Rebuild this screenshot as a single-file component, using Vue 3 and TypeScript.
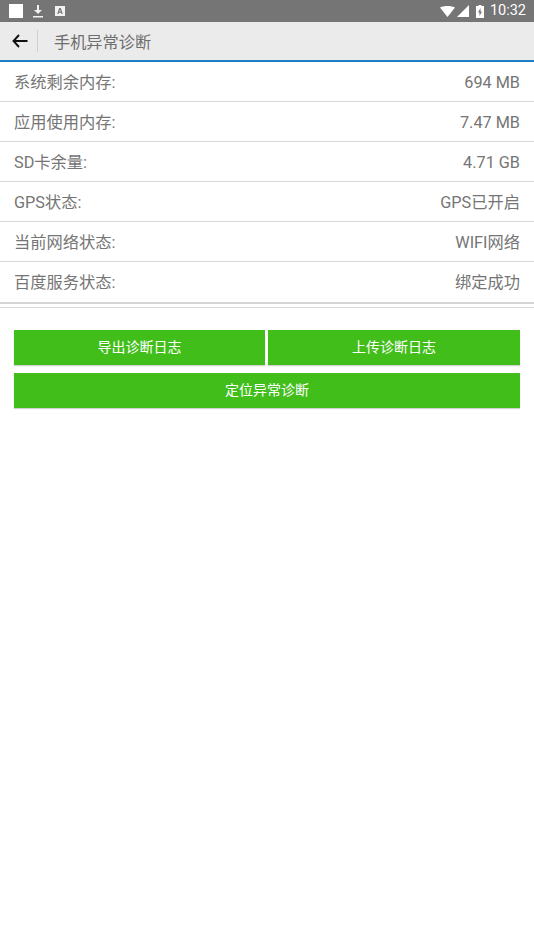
<script setup lang="ts">
const rows: [string, string][] = [
  ['系统剩余内存:', '694 MB'],
  ['应用使用内存:', '7.47 MB'],
  ['SD卡余量:', '4.71 GB'],
  ['GPS状态:', 'GPS已开启'],
  ['当前网络状态:', 'WIFI网络'],
  ['百度服务状态:', '绑定成功'],
]
</script>

<template>
  <div class="page">
    <div class="status">
      <div class="status-left">
        <span class="white-box"></span>
        <svg class="dl" width="12" height="14" viewBox="0 0 12 14"><path d="M5 1h2v5h3L6 10 2 6h3zM1 12h10v1.4H1z" fill="#f2f2f2"/></svg>
        <svg class="a" width="10" height="10" viewBox="0 0 10 10"><path fill-rule="evenodd" d="M0 0h10v10H0zM4.2 2 2.2 8h1.3l.4-1.3h2.2L6.5 8h1.3L5.8 2zM4.3 5.6 5 3.6l.7 2z" fill="#f2f2f2"/></svg>
      </div>
      <div class="status-right">
        <svg class="wifi" width="15" height="11" viewBox="0 0 17 12" preserveAspectRatio="none"><path d="M0 1.6C2.4.6 5.3 0 8.500 0S14.600.6 17 1.600L8.500 12z" fill="#fff"/></svg>
        <svg class="signal" width="12" height="12" viewBox="0 0 12 12"><path d="M12 0v12H0z" fill="#fff"/></svg>
        <svg class="batt" width="8" height="13" viewBox="0 0 8 13"><path fill-rule="evenodd" d="M2.500 0h3v1H8v12H0V1h2.500zM4.500 3 2 7.500h1.500V11L6 6.500H4.500z" fill="#fff"/></svg>
        <span class="time">10:32</span>
      </div>
    </div>

    <header class="bar">
      <svg class="back" width="16" height="14" viewBox="0 0 16 14"><path d="M7 1 1.500 7 7 13M1.500 7H15.500" fill="none" stroke="#111" stroke-width="1.900"/></svg>
      <span class="sep"></span>
      <span class="title">手机异常诊断</span>
    </header>

    <div class="list">
      <div v-for="row in rows" :key="row[0]" class="row">
        <span class="cell">{{ row[0] }}</span>
        <span class="cell">{{ row[1] }}</span>
      </div>
    </div>

    <div class="actions">
      <div class="btn-line">
        <button class="btn">导出诊断日志</button>
        <button class="btn">上传诊断日志</button>
      </div>
      <button class="btn">定位异常诊断</button>
    </div>
  </div>
</template>

<style scoped>
.page {
  width: 534px;
  height: 950px;
  background: #fff;
  overflow: hidden;
  font-family: "Roboto", "Noto Sans CJK SC", sans-serif;
}
.status {
  height: 22px;
  background: #757575;
  display: flex;
  justify-content: space-between;
  align-items: center;
  padding: 0 8px 0 9px;
}
.status-left, .status-right {
  display: flex;
  align-items: center;
}
.white-box {
  width: 14px;
  height: 14px;
  background: #fff;
}
.dl { margin-left: 9px; }
.a { margin-left: 11px; }
.wifi { margin-right: 2px; }
.signal { margin-right: 7px; }
.batt { margin-right: 6px; }
.time {
  color: #fff;
  font-size: 14.5px;
  line-height: 22px;
}
.bar {
  height: 38px;
  background: #ebebeb;
  border-bottom: 2px solid #1f7fc4;
  display: flex;
  align-items: center;
}
.back { margin-left: 12px; }
.sep {
  width: 1px;
  height: 22px;
  background: #cfcfcf;
  margin-left: 9px;
}
.title {
  margin-left: 16px;
  font-size: 16.2px;
  color: #6e6e6e;
}
.list {
  border-bottom: 2px solid #d4d4d4;
}
.row {
  height: 39px;
  border-bottom: 1px solid #d8d8d8;
  display: flex;
  justify-content: space-between;
  align-items: center;
  padding: 0 14px;
  font-size: 16.25px;
  color: #757575;
}
.cell {
  line-height: 20px;
  padding-top: 2px;
}
.row:last-child { border-bottom: none; height: 40px; }
.actions {
  border-top: 1px solid #d8d8d8;
  margin-top: 3px;
  padding: 22px 14px 0;
  display: flex;
  flex-direction: column;
  gap: 8px;
}
.btn-line {
  display: grid;
  grid-template-columns: 251px 1fr;
  gap: 3px;
}
.btn {
  height: 35px;
  border: none;
  padding: 0 0 2px;
  background: #42be1b;
  color: #fff;
  font-family: inherit;
  font-size: 14px;
  line-height: 18px;
  box-shadow: 0 1px 1px #d0d0d0;
}
</style>
